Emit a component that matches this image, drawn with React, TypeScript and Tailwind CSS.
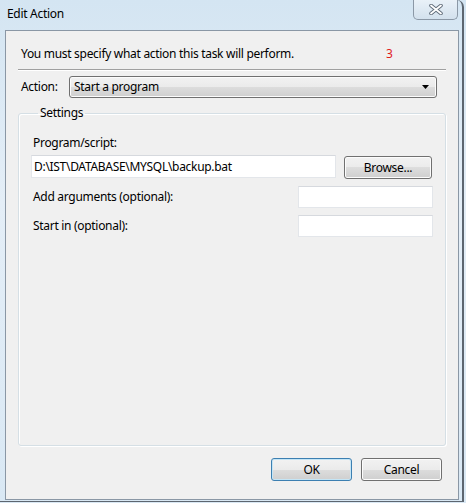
function CloseGlyph() {
  return (
    <svg width="14" height="11" viewBox="0 0 14 11" aria-hidden="true">
      <path d="M2 1.5 L12 9.5 M12 1.5 L2 9.5" stroke="#5f6b78" strokeWidth="3.6" strokeLinecap="round" />
      <path d="M2 1.5 L12 9.5 M12 1.5 L2 9.5" stroke="#ffffff" strokeWidth="1.8" strokeLinecap="round" />
    </svg>
  )
}

function WinButton({ label, focused = false, className = '' }: { label: string; focused?: boolean; className?: string }) {
  return (
    <button
      className={`relative h-[23px] rounded-[3px] border text-[12px] text-black bg-[linear-gradient(to_bottom,#f2f2f2_0%,#ebebeb_50%,#dddddd_50%,#cfcfcf_100%)] ${
        focused ? 'border-[#3c7fb1] shadow-[inset_0_0_0_1px_#c4e5f6]' : 'border-[#707070] shadow-[inset_0_0_0_1px_#fcfcfc]'
      } ${className}`}
    >
      {label}
    </button>
  )
}

function TextBox({ value = '', className = '' }: { value?: string; className?: string }) {
  return (
    <div className={`h-[22px] bg-white border border-[#e3e6ea] border-t-[#d6d9de] flex items-center px-[2px] text-[12px] text-black ${className}`}>
      {value}
    </div>
  )
}

export default function App() {
  return (
    <div className="w-[466px] h-[503px] overflow-hidden bg-[linear-gradient(to_bottom,#d4e5f2_0%,#e4eef7_40%,#d9e8f4_100%)] font-['Noto_Sans',sans-serif] text-[12px] tracking-[-0.3px] text-black">
      <div className="w-[464px] h-[502px] border-r-2 border-b border-[#5d6670] rounded-tr-[7px] flex flex-col px-[5px]">
        {/* title bar */}
        <div className="h-[30px] flex justify-between">
          <span className="pl-[2px] pt-[6px] text-[12px] leading-[16px]">Edit Action</span>
          <div className="w-[45px] h-[20px] -mr-[1px] border border-t-0 border-[#8b98a6] rounded-b-[5px] bg-[linear-gradient(to_bottom,#e9f1f8,#d3e1ed)] flex items-center justify-center">
            <CloseGlyph />
          </div>
        </div>

        {/* client area */}
        <div className="w-[454px] h-[470px] border border-[#8a97a5] bg-[#f0f0f0] flex flex-col px-[12px]">
          <div className="flex items-center pt-[15px] pl-[3px] leading-[16px]">
            <span className="w-[365px]">You must specify what action this task will perform.</span>
            <span className="text-[#e01b1b]">3</span>
          </div>
          <div className="mt-[7px] h-px bg-[#a0a0a0] border-b border-white box-content" />

          <div className="flex items-center mt-[5px] h-[22px]">
            <span className="w-[51px] pl-[3px]">Action:</span>
            <div className="w-[368px] h-[22px] rounded-[3px] border border-[#707070] bg-[linear-gradient(to_bottom,#f2f2f2_0%,#ebebeb_50%,#dddddd_50%,#cfcfcf_100%)] shadow-[inset_0_0_0_1px_#fcfcfc] flex items-center justify-between pl-[4px] pr-[7px]">
              <span>Start a program</span>
              <svg width="7" height="4" viewBox="0 0 7 4" aria-hidden="true">
                <path d="M0 0 H7 L3.5 4 Z" fill="#000" />
              </svg>
            </div>
          </div>

          <fieldset className="mt-[7px] h-[341px] border border-[#d5dfe5] rounded-[3px] shadow-[inset_1px_1px_0_#ffffff,1px_1px_0_#ffffff] px-[12px]">
            <legend className="ml-[7px] px-[2px] leading-[16px]">Settings</legend>
            <div className="mt-[14px] leading-[16px] pl-[2px]">Program/script:</div>
            <div className="flex mt-[4px] gap-[8px]">
              <TextBox value="D:\IST\DATABASE\MYSQL\backup.bat" className="w-[305px] h-[23px]" />
              <WinButton label="Browse..." className="w-[88px] mt-[1px]" />
            </div>
            <div className="flex items-center justify-between mt-[7px]">
              <span className="pl-[2px]">Add arguments (optional):</span>
              <TextBox className="w-[135px]" />
            </div>
            <div className="flex items-center justify-between mt-[7px]">
              <span className="pl-[2px]">Start in (optional):</span>
              <TextBox className="w-[135px]" />
            </div>
          </fieldset>

          <div className="flex justify-end gap-[9px] mt-[12px] pr-[4px]">
            <WinButton label="OK" focused className="w-[81px]" />
            <WinButton label="Cancel" className="w-[81px]" />
          </div>
        </div>
      </div>
    </div>
  )
}
